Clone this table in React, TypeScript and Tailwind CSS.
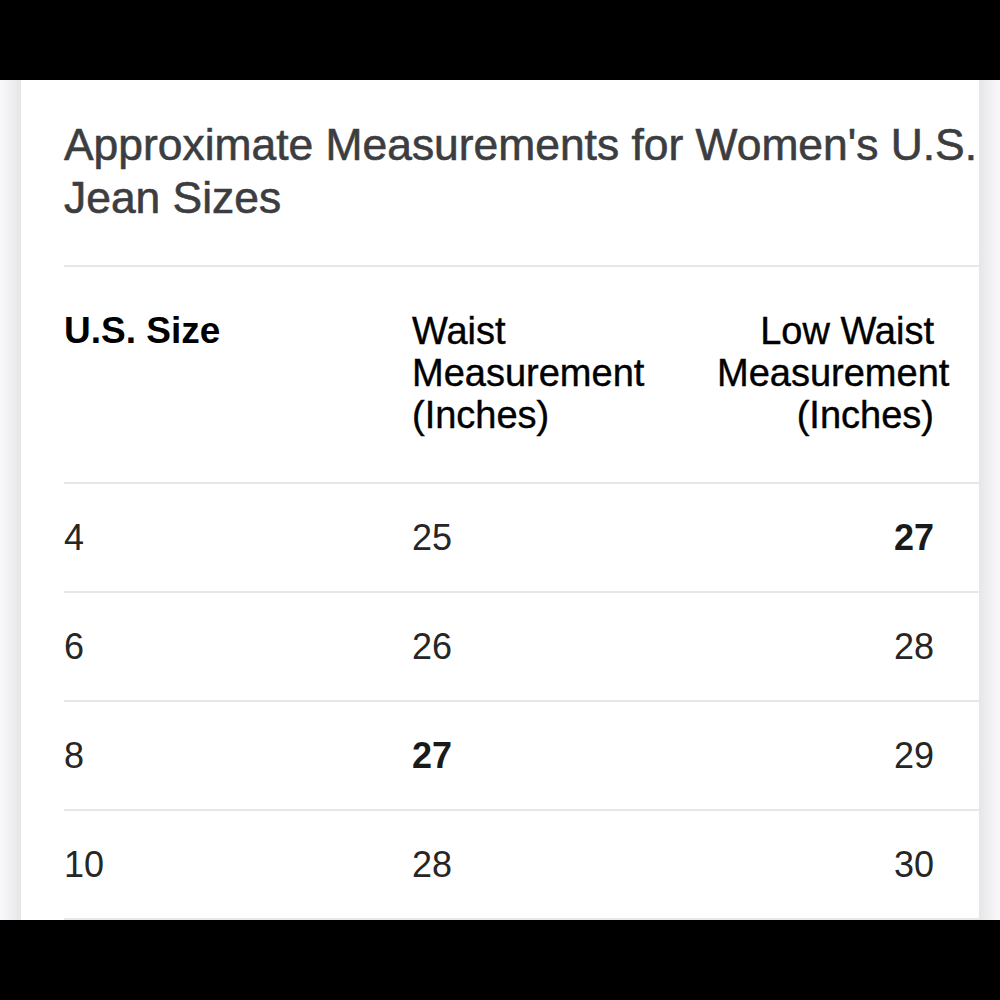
import React from "react";

const rows: { size: string; waist: string; low: string; bw?: boolean; bl?: boolean }[] = [
  { size: "4", waist: "25", low: "27", bl: true },
  { size: "6", waist: "26", low: "28" },
  { size: "8", waist: "27", low: "29", bw: true },
  { size: "10", waist: "28", low: "30" },
];

export default function App() {
  return (
    <div
      className="w-[1000px] h-[1000px] bg-black flex flex-col overflow-hidden"
      style={{ fontFamily: '"Liberation Sans", Arial, sans-serif' }}
    >
      <div className="h-[80px] shrink-0 bg-black" />
      <div className="h-[840px] shrink-0 flex overflow-hidden bg-white">
        <div className="w-[21px] shrink-0 bg-gradient-to-r from-[#f9f9fb] to-[#e6e6e9]" />
        <div className="w-[958px] shrink-0 bg-white flex flex-col">
          <h1 className="pl-[43px] pt-[38px] text-[44.4px] leading-[53px] text-[#3c3d40] font-normal whitespace-nowrap [-webkit-text-stroke:0.6px]">
            Approximate Measurements for Women's U.S.
            <br />
            Jean Sizes
          </h1>
          <div className="ml-[43px] mt-[41px] border-t-2 border-[#e7e7e9]">
            <div className="grid grid-cols-[348px_305px_217px] pt-[43px] pb-[46px] border-b-2 border-[#e7e7e9] text-black leading-[42px]">
              <div className="text-[37px] font-bold">U.S. Size</div>
              <div className="text-[38px] [-webkit-text-stroke:0.4px]">
                Waist
                <br />
                Measurement
                <br />
                (Inches)
              </div>
              <div className="text-[38px] text-right [-webkit-text-stroke:0.4px]">
                Low Waist
                <br />
                Measurement
                <br />
                (Inches)
              </div>
            </div>
            {rows.map((r) => (
              <div
                key={r.size}
                className="grid grid-cols-[348px_305px_217px] pt-[33px] pb-[32px] border-b-2 border-[#e7e7e9] text-[36px] leading-[42px] text-[#262626]"
              >
                <div>{r.size}</div>
                <div className={r.bw ? "font-bold text-[#1a1a1a]" : ""}>{r.waist}</div>
                <div className={r.bl ? "text-right font-bold text-[#1a1a1a]" : "text-right"}>{r.low}</div>
              </div>
            ))}
          </div>
        </div>
        <div className="w-[21px] shrink-0 bg-gradient-to-r from-[#e6e6e9] to-[#f9f9fb]" />
      </div>
      <div className="h-[80px] shrink-0 bg-black" />
    </div>
  );
}
